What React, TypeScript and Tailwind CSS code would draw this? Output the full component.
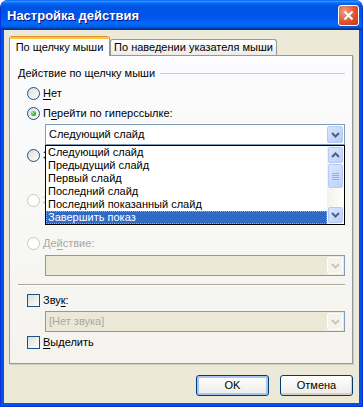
import React from "react";

const ui = "font-['Liberation_Sans',Arial,sans-serif] text-[11px] leading-[13px]";

function Radio({ checked, disabled }: { checked?: boolean; disabled?: boolean }) {
  return (
    <span
      className={
        "w-[13px] h-[13px] rounded-full border flex items-center justify-center shrink-0 " +
        (disabled
          ? "border-[#CAC8BB] bg-white"
          : "border-[#1C5180] bg-[linear-gradient(135deg,#DCDCD7,#FFFFFF)]")
      }
    >
      {checked && (
        <span className="w-[5px] h-[5px] rounded-full bg-[radial-gradient(circle_at_35%_35%,#A5E8A5,#21A121_70%)]" />
      )}
    </span>
  );
}

function Checkbox() {
  return (
    <span className="w-[13px] h-[13px] border border-[#1C5180] bg-[linear-gradient(135deg,#DCDCD7,#FFFFFF)] shrink-0" />
  );
}

function Label({ pre, u, post, disabled }: { pre?: string; u: string; post?: string; disabled?: boolean }) {
  return (
    <span className={disabled ? "text-[#ACA899]" : "text-black"}>
      {pre}
      <span className="underline underline-offset-[2px]">{u}</span>
      {post}
    </span>
  );
}

function Chevron({ up, color }: { up?: boolean; color: string }) {
  return (
    <svg width="9" height="6" viewBox="0 0 9 6">
      <polyline
        points={up ? "1,5 4.5,1.5 8,5" : "1,1 4.5,4.5 8,1"}
        fill="none"
        stroke={color}
        strokeWidth="2"
      />
    </svg>
  );
}

function DropBtn({ disabled }: { disabled?: boolean }) {
  return (
    <span
      className={
        "w-[16px] h-full rounded-[2px] border flex items-center justify-center " +
        (disabled
          ? "bg-[#F4F3EE] border-white"
          : "bg-[linear-gradient(135deg,#D9E5FD,#B8CDF9)] border-[#B5C9F5]")
      }
    >
      <Chevron color={disabled ? "#C9C7BA" : "#4D6185"} />
    </span>
  );
}

function Combo({ text, disabled, children }: { text?: string; disabled?: boolean; children?: React.ReactNode }) {
  return (
    <div
      className={
        "relative ml-[35px] w-[300px] h-[21px] border border-[#7F9DB9] flex items-stretch p-[1px] " +
        (disabled ? "bg-[#EBE8D7]" : "bg-white")
      }
    >
      <span className={"flex-1 flex items-center pl-[2px] " + (disabled ? "text-[#ACA899]" : "text-black")}>
        {text}
      </span>
      <DropBtn disabled={disabled} />
      {children}
    </div>
  );
}

const slides = [
  "Следующий слайд",
  "Предыдущий слайд",
  "Первый слайд",
  "Последний слайд",
  "Последний показанный слайд",
  "Завершить показ",
];

function SlideList() {
  return (
    <div className="absolute left-[-1px] top-[20px] w-[300px] h-[80px] border border-black bg-white flex z-20">
      <div className="flex-1 flex flex-col">
        {slides.map((s, i) =>
          i === slides.length - 1 ? (
            <div
              key={s}
              className="h-[13px] flex items-center pl-[1px] bg-[#316AC5] text-white border border-dotted border-[#E6A339]"
            >
              {s}
            </div>
          ) : (
            <div key={s} className="h-[13px] flex items-center pl-[2px] text-black whitespace-nowrap">
              {s}
            </div>
          )
        )}
      </div>
      <div className="w-[17px] bg-[linear-gradient(90deg,#F3F1EC,#FEFEFB)] flex flex-col items-center py-[1px]">
        <span className="w-[15px] h-[16px] rounded-[2px] border border-[#B7CAF5] bg-[linear-gradient(135deg,#DCE7FE,#BCD0FA)] flex items-center justify-center">
          <Chevron up color="#4D6185" />
        </span>
        <span className="mt-[1px] w-[15px] h-[24px] rounded-[2px] border border-[#B7CAF5] bg-[linear-gradient(135deg,#DCE7FE,#BCD0FA)] flex flex-col items-center justify-center gap-[1px]">
          {[0, 1, 2, 3].map((k) => (
            <span key={k} className="w-[7px] h-[1px] bg-[#8CB0F8]" />
          ))}
        </span>
        <span className="flex-1" />
        <span className="w-[15px] h-[16px] rounded-[2px] border border-[#B7CAF5] bg-[linear-gradient(135deg,#DCE7FE,#BCD0FA)] flex items-center justify-center">
          <Chevron color="#4D6185" />
        </span>
      </div>
    </div>
  );
}

function Row({ children, mt }: { children: React.ReactNode; mt: string }) {
  return <div className={"ml-[17px] h-[14px] flex items-center gap-[3px] " + mt}>{children}</div>;
}

export default function App() {
  return (
    <div className={ui + " w-[363px] h-[407px] flex flex-col rounded-t-[8px] overflow-hidden bg-[#0054E3] border-x border-b border-[#0831D9]"}>
      <div className="h-[30px] shrink-0 -mx-px flex items-center justify-between pl-[7px] pr-[4px] bg-[linear-gradient(180deg,#0058EE_0%,#3593FF_4%,#288EFF_6%,#127DFF_8%,#036FFC_10%,#0262EE_14%,#0057E5_20%,#0054E3_24%,#0055EB_56%,#005BF5_66%,#026AFE_76%,#0062EF_86%,#0052D6_92%,#0040AB_94%,#003092_100%)]">
        <span className="text-white font-bold text-[13px] [text-shadow:1px_1px_#0A1883]">Настройка действия</span>
        <span className="w-[21px] h-[21px] rounded-[3px] border border-white bg-[radial-gradient(circle_at_30%_30%,#F0A08A,#E0522D_55%,#C4381A)] flex items-center justify-center">
          <svg width="11" height="11" viewBox="0 0 11 11">
            <path d="M1.5 1.5 L9.5 9.5 M9.5 1.5 L1.5 9.5" stroke="white" strokeWidth="2" />
          </svg>
        </span>
      </div>

      <div className="flex-1 mx-[3px] mb-[3px] bg-[#ECE9D8] flex flex-col">
        <div className="mt-[6px] ml-[5px] h-[19px] flex items-end">
          <div className="relative z-10 -mb-px h-[20px] w-[101px] border-x border-[#919B9C] bg-[#FCFCFE] flex flex-col rounded-t-[3px] overflow-hidden">
            <span className="h-[1px] bg-[#E68B2C]" />
            <span className="h-[2px] bg-[#FFC73C]" />
            <span className="flex-1 flex items-center justify-center text-black">По щелчку мыши</span>
          </div>
          <div className="h-[16px] w-[167px] border-x border-t border-[#919B9C] rounded-t-[3px] bg-[linear-gradient(180deg,#FFFFFF,#ECEBE6)] flex items-center justify-center text-black">
            По наведении указателя мыши
          </div>
        </div>

        <div className="ml-[5px] w-[344px] h-[309px] border border-[#919B9C] bg-[linear-gradient(180deg,#FCFCFE,#F4F3EE)] shadow-[1px_1px_0_#D0CEBF] flex flex-col pr-[7px]">
          <div className="mt-[10px] ml-[8px] h-[14px] flex items-center gap-[5px]">
            <span className="text-black whitespace-nowrap">Действие по щелчку мыши</span>
            <span className="flex-1 h-[1px] bg-[#D0D0BF]" />
          </div>
          <Row mt="mt-[6px]">
            <Radio />
            <Label u="Н" post="ет" />
          </Row>
          <Row mt="mt-[6px]">
            <Radio checked />
            <Label pre="П" u="е" post="рейти по гиперссылке:" />
          </Row>
          <div className="mt-[4px]">
            <Combo text="Следующий слайд">
              <SlideList />
            </Combo>
          </div>
          {/* rows hidden under the open list: only their left edge shows */}
          <Row mt="mt-[3px]">
            <Radio />
            <span className="w-[3px] overflow-hidden text-black">З</span>
          </Row>
          <div className="mt-[4px] h-[21px]" />
          <Row mt="mt-[6px]">
            <Radio disabled />
            <span className="w-[3px] overflow-hidden text-[#ACA899]">З</span>
          </Row>
          <div className="mt-[4px] h-[21px]" />
          <Row mt="mt-[4px]">
            <Radio disabled />
            <Label pre="Де" u="й" post="ствие:" disabled />
          </Row>
          <div className="mt-[5px]">
            <Combo disabled />
          </div>
          <div className="mt-[8px] ml-[8px] flex flex-col">
            <span className="h-[1px] bg-[#ACA899]" />
            <span className="h-[1px] bg-white" />
          </div>
          <Row mt="mt-[7px]">
            <Checkbox />
            <Label pre="Зву" u="к" post=":" />
          </Row>
          <div className="mt-[4px]">
            <Combo text="[Нет звука]" disabled />
          </div>
          <Row mt="mt-[3px]">
            <Checkbox />
            <Label u="В" post="ыделить" />
          </Row>
        </div>

        <div className="mt-[11px] mr-[6px] flex justify-end gap-[11px]">
          <button className="w-[73px] h-[21px] rounded-[3px] border border-[#003C74] bg-[linear-gradient(180deg,#FFFFFF,#ECEBE6)] shadow-[inset_0_0_0_2px_#A8C4F0] text-black">
            OK
          </button>
          <button className="w-[73px] h-[21px] rounded-[3px] border border-[#003C74] bg-[linear-gradient(180deg,#FFFFFF,#ECEBE6)] shadow-[inset_-1px_-2px_0_#D6D0C5] text-black">
            Отмена
          </button>
        </div>
      </div>
    </div>
  );
}
